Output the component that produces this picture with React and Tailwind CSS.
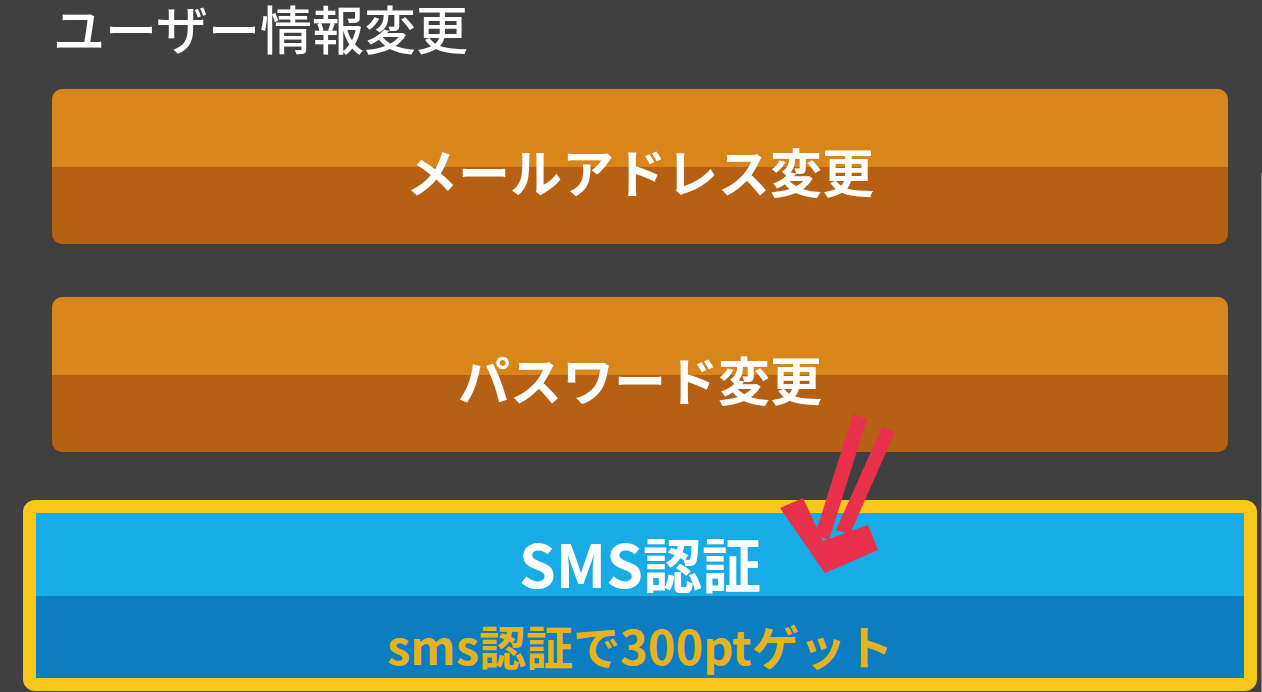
import React from "react";

const font = { fontFamily: '"Noto Sans CJK JP", "Noto Sans", sans-serif' };

function OrangeButton({ label }) {
  return (
    <div className="h-[155px] rounded-[10px] overflow-hidden flex flex-col relative">
      <div className="h-[78px] bg-[#d8851a]" />
      <div className="flex-1 bg-[#b66013]" />
      <div className="absolute inset-0 flex items-center justify-center pt-[8px] text-white text-[52px] font-bold leading-none">
        {label}
      </div>
    </div>
  );
}

export default function App() {
  return (
    <div className="relative h-[692px] w-[1262px] overflow-hidden bg-[#404040]" style={font}>
      <div className="pl-[52px] pr-[34px]">
        <div className="h-[89px] pl-[1px] text-white text-[52px] font-medium leading-[56px]">
          ユーザー情報変更
        </div>
        <OrangeButton label="メールアドレス変更" />
        <div className="h-[53px]" />
        <OrangeButton label="パスワード変更" />
      </div>
      <div className="ml-[23px] mr-[5px] mt-[48px] h-[191px] rounded-[12px] border-[13px] border-[#f7c81b] overflow-hidden flex flex-col">
        <div className="h-[83px] bg-[#18abe6] flex items-center justify-center pt-[16px] text-white text-[59px] font-bold leading-none">
          SMS認証
        </div>
        <div className="flex-1 bg-[#0c7dc1] flex items-center justify-center pt-[14px] text-[#e6b21f] text-[47px] font-bold leading-none">
          sms認証で300ptゲット
        </div>
      </div>
      <div className="absolute right-0 top-[173px] bottom-0 w-px bg-[#8a8a8a]" />
      <svg className="absolute inset-0 pointer-events-none" width="1262" height="692" viewBox="0 0 1262 692">
        <g fill="#e8304a">
          <polygon points="853,414 867,419 829,540 815,535" />
          <polygon points="882,427 895,432 850,534 836,530" />
          <polygon points="780,508 803,498 823,541 868,525 878,550 825,573" />
        </g>
      </svg>
    </div>
  );
}
